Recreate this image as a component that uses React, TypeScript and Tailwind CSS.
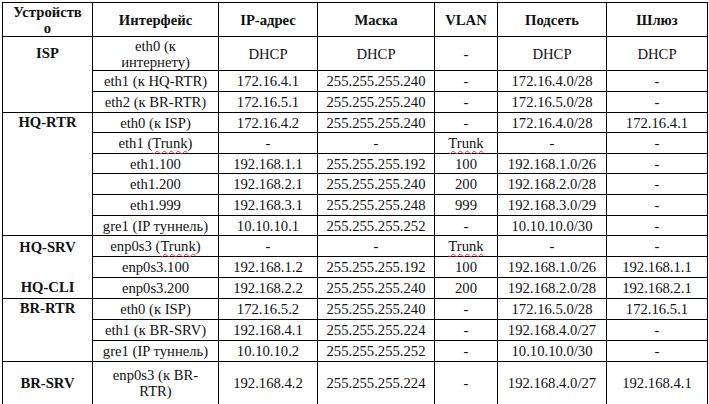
const rows: {
  device?: { label: React.ReactNode; span: number; cls: string }
  h: string
  cells: React.ReactNode[]
}[] = []

const serif = "font-['Liberation_Serif'] text-[14.67px] leading-[16px] text-[#111]"

function Trunk() {
  return <span className="underline decoration-wavy decoration-red-500 decoration-1 underline-offset-2">Trunk</span>
}

const data: [string, React.ReactNode[]][] = [
  ["h-[34px]", [<>eth0 (к<br />интернету)</>, "DHCP", "DHCP", "-", "DHCP", "DHCP"]],
  ["h-[21px]", ["eth1 (к HQ-RTR)", "172.16.4.1", "255.255.255.240", "-", "172.16.4.0/28", "-"]],
  ["h-[21px]", ["eth2 (к BR-RTR)", "172.16.5.1", "255.255.255.240", "-", "172.16.5.0/28", "-"]],
  ["h-[20px]", ["eth0 (к ISP)", "172.16.4.2", "255.255.255.240", "-", "172.16.4.0/28", "172.16.4.1"]],
  ["h-[21px]", [<>eth1 (<Trunk />)</>, "-", "-", <Trunk />, "-", "-"]],
  ["h-[20px]", ["eth1.100", "192.168.1.1", "255.255.255.192", "100", "192.168.1.0/26", "-"]],
  ["h-[21px]", ["eth1.200", "192.168.2.1", "255.255.255.240", "200", "192.168.2.0/28", "-"]],
  ["h-[21px]", ["eth1.999", "192.168.3.1", "255.255.255.248", "999", "192.168.3.0/29", "-"]],
  ["h-[20px]", ["gre1 (IP туннель)", "10.10.10.1", "255.255.255.252", "-", "10.10.10.0/30", "-"]],
  ["h-[21px]", [<>enp0s3 (<Trunk />)</>, "-", "-", <Trunk />, "-", "-"]],
  ["h-[21px]", ["enp0s3.100", "192.168.1.2", "255.255.255.192", "100", "192.168.1.0/26", "192.168.1.1"]],
  ["h-[21px]", ["enp0s3.200", "192.168.2.2", "255.255.255.240", "200", "192.168.2.0/28", "192.168.2.1"]],
  ["h-[21px]", ["eth0 (к ISP)", "172.16.5.2", "255.255.255.240", "-", "172.16.5.0/28", "172.16.5.1"]],
  ["h-[21px]", ["eth1 (к BR-SRV)", "192.168.4.1", "255.255.255.224", "-", "192.168.4.0/27", "-"]],
  ["h-[21px]", ["gre1 (IP туннель)", "10.10.10.2", "255.255.255.252", "-", "10.10.10.0/30", "-"]],
  ["h-[43px]", [<>enp0s3 (к BR-<br />RTR)</>, "192.168.4.2", "255.255.255.224", "-", "192.168.4.0/27", "192.168.4.1"]],
]

const devices: Record<number, { label: React.ReactNode; span: number; cls: string }> = {
  0: { label: "ISP", span: 3, cls: "align-top pt-[8px]" },
  3: { label: "HQ-RTR", span: 6, cls: "align-top pt-[1px]" },
  9: {
    label: (
      <div className="flex flex-col items-center">
        <span className="mt-[3px]">HQ-SRV</span>
        <span className="mt-[24px]">HQ-CLI</span>
      </div>
    ),
    span: 3,
    cls: "align-top",
  },
  12: { label: "BR-RTR", span: 3, cls: "align-top pt-[1px]" },
  15: { label: "BR-SRV", span: 1, cls: "align-middle" },
}

data.forEach(([h, cells], i) => rows.push({ h, cells, device: devices[i] }))

const headers = ["Интерфейс", "IP-адрес", "Маска", "VLAN", "Подсеть", "Шлюз"]

export default function App() {
  return (
    <div className={`w-[709px] h-[404px] overflow-hidden bg-white pl-[2px] pt-[2px] ${serif}`}>
      <table className={`w-[705px] table-fixed border-collapse ${serif}`}>
        <colgroup>
          <col className="w-[90px]" />
          <col className="w-[126px]" />
          <col className="w-[99px]" />
          <col className="w-[117px]" />
          <col className="w-[63px]" />
          <col className="w-[109px]" />
          <col className="w-[101px]" />
        </colgroup>
        <thead>
          <tr className="h-[34px]">
            <th className={`border border-black p-0 align-middle font-bold text-center ${serif}`}>
              Устройств
              <br />о
            </th>
            {headers.map((h) => (
              <th key={h} className={`border border-black p-0 align-middle font-bold text-center ${serif}`}>
                {h}
              </th>
            ))}
          </tr>
        </thead>
        <tbody>
          {rows.map((r, i) => (
            <tr key={i} className={r.h}>
              {r.device && (
                <td
                  rowSpan={r.device.span}
                  className={`border border-black p-0 text-center font-bold ${serif} ${r.device.cls}`}
                >
                  {r.device.label}
                </td>
              )}
              {r.cells.map((c, j) => (
                <td key={j} className={`border border-black p-0 align-middle text-center whitespace-nowrap ${serif}`}>
                  {c}
                </td>
              ))}
            </tr>
          ))}
        </tbody>
      </table>
    </div>
  )
}
